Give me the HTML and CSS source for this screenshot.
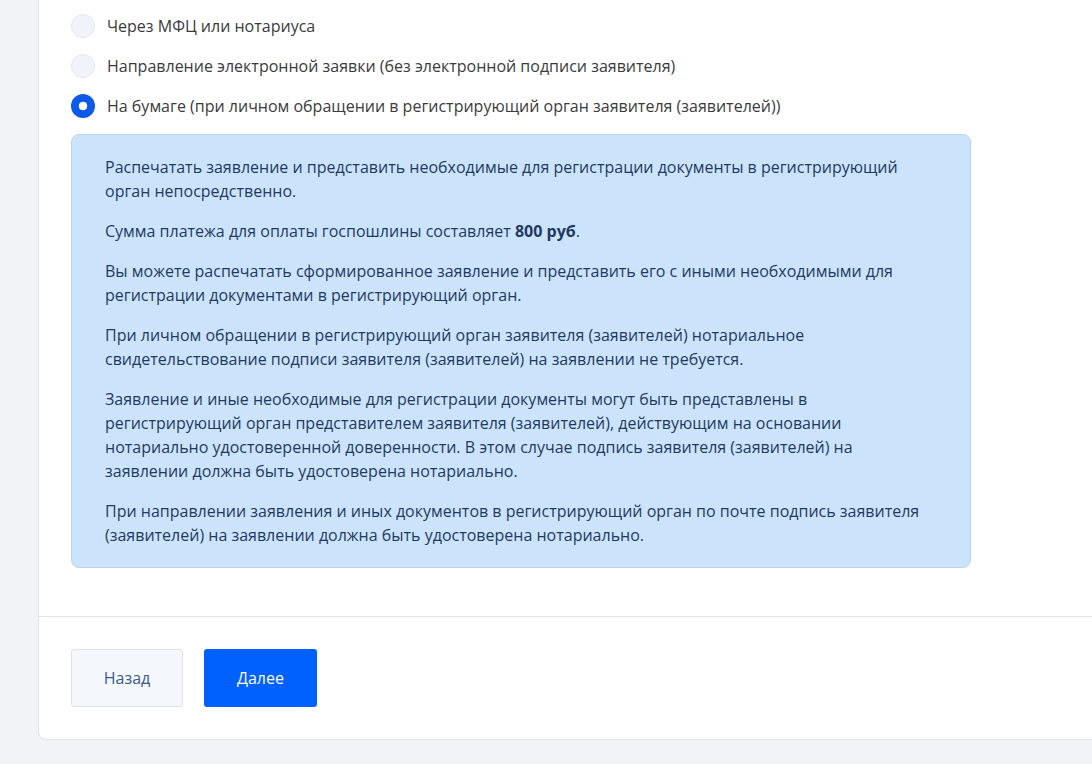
FILE: index.html
```html
<!DOCTYPE html>
<html lang="ru">
<head>
<meta charset="utf-8">
<link rel="stylesheet" href="styles.css">
</head>
<body>
<div class="card">
  <div class="card-body">
    <div class="radios">
      <label class="radio"><span class="dot"></span><span>Через МФЦ или нотариуса</span></label>
      <label class="radio"><span class="dot"></span><span>Направление электронной заявки (без электронной подписи заявителя)</span></label>
      <label class="radio checked"><span class="dot"></span><span>На бумаге (при личном обращении в регистрирующий орган заявителя (заявителей))</span></label>
    </div>
    <div class="info">
      <p>Распечатать заявление и представить необходимые для регистрации документы в регистрирующий орган непосредственно.</p>
      <p>Сумма платежа для оплаты госпошлины составляет <b>800 руб</b>.</p>
      <p>Вы можете распечатать сформированное заявление и представить его с иными необходимыми для регистрации документами в регистрирующий орган.</p>
      <p>При личном обращении в регистрирующий орган заявителя (заявителей) нотариальное свидетельствование подписи заявителя (заявителей) на заявлении не требуется.</p>
      <p>Заявление и иные необходимые для регистрации документы могут быть представлены в регистрирующий орган представителем заявителя (заявителей), действующим на основании нотариально удостоверенной доверенности. В этом случае подпись заявителя (заявителей) на заявлении должна быть удостоверена нотариально.</p>
      <p>При направлении заявления и иных документов в регистрирующий орган по почте подпись заявителя (заявителей) на заявлении должна быть удостоверена нотариально.</p>
    </div>
  </div>
  <div class="card-footer">
    <button class="btn btn-back">Назад</button>
    <button class="btn btn-next">Далее</button>
  </div>
</div>
</body>
</html>
```
FILE: styles.css
```css
html, body {
  margin: 0;
  padding: 0;
}
body {
  background: #f1f3f7;
  font-family: "Open Sans", "Noto Sans", sans-serif;
  font-size: 16px;
  line-height: 24px;
  color: #3b3b3b;
  width: 1092px;
  height: 764px;
  overflow: hidden;
}
.card {
  margin-left: 38px;
  width: 1080px;
  background: #fff;
  border: 1px solid #dfe3e9;
  border-top: none;
  border-radius: 0 0 8px 8px;
}
.card-body {
  padding: 14px 0 48px 32px;
}
.radios {
  display: flex;
  flex-direction: column;
  gap: 16px;
}
.radio {
  display: flex;
  align-items: center;
  gap: 12px;
  height: 24px;
}
.dot {
  width: 22px;
  height: 22px;
  border-radius: 50%;
  background: #f0f4fa;
  border: 1px solid #e2e7ef;
  flex: none;
  box-sizing: content-box;
}
.radio.checked .dot {
  width: 24px;
  height: 24px;
  border: none;
  background: radial-gradient(circle, #fff 0 4px, #0d5ae8 4.6px);
}
.info {
  margin-top: 16px;
  width: 832px;
  padding: 20px 33px 20px 33px;
  background: #cce4fb;
  border: 1px solid #bcd4ec;
  border-radius: 8px;
  color: #1f3a60;
}
.info p {
  margin: 0 0 16px;
}
.info p:last-child {
  margin-bottom: 0;
}
.info b {
  font-weight: 700;
}
.card-footer {
  border-top: 1px solid #dfe3e9;
  padding: 32px 0 32px 32px;
  display: flex;
  gap: 21px;
}
.btn {
  height: 58px;
  font-family: "Open Sans", "Noto Sans", sans-serif;
  font-size: 16px;
  border-radius: 3px;
  cursor: pointer;
}
.btn-back {
  width: 112px;
  background: #f4f7fb;
  border: 1px solid #dde3eb;
  color: #3b5a8c;
}
.btn-next {
  width: 113px;
  background: #0061fe;
  border: none;
  color: #fff;
  font-weight: 500;
}
```
